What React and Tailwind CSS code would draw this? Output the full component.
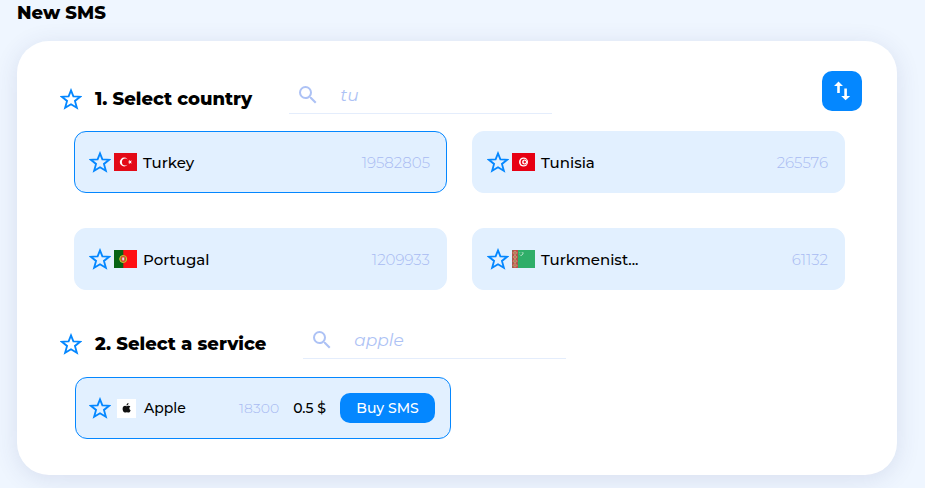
import React from "react";

function Star({ label }) {
  return (
    <button type="button" aria-label={label} className="shrink-0 text-[#0487ff]">
      <svg viewBox="0 0 24 24" className="block h-[22px] w-[22px]" fill="none" stroke="currentColor" strokeWidth="2">
        <path d="M12 2.6 14.6 9.1 22 9.5 16.3 14.1 18.4 21.6 12 17.7 5.6 21.6 7.7 14.1 2 9.5 9.4 9.1Z" />
      </svg>
    </button>
  );
}

function TurkeyFlag() {
  return (
    <svg viewBox="0 0 23 18" className="h-[18px] w-[23px] shrink-0">
      <rect width="23" height="18" fill="#e30a17" />
      <circle cx="10.2" cy="9" r="4.4" fill="#fff" />
      <circle cx="11.4" cy="9" r="3.5" fill="#e30a17" />
      <path d="m13.8 9 1.5-.6V6.8l1 1.3 1.6-.5-1 1.4 1 1.4-1.6-.5-1 1.3V9.6Z" fill="#fff" />
    </svg>
  );
}

function TunisiaFlag() {
  return (
    <svg viewBox="0 0 23 18" className="h-[18px] w-[23px] shrink-0">
      <rect width="23" height="18" fill="#e70013" />
      <circle cx="11.5" cy="9" r="4.5" fill="#fff" />
      <circle cx="11.8" cy="9" r="3.2" fill="#e70013" />
      <circle cx="12.6" cy="9" r="2.5" fill="#fff" />
      <path d="m10.7 9 1.4-.5V7l.9 1.2 1.4-.4-.9 1.2.9 1.2-1.4-.4-.9 1.2V9.5Z" fill="#e70013" />
    </svg>
  );
}

function PortugalFlag() {
  return (
    <svg viewBox="0 0 23 18" className="h-[18px] w-[23px] shrink-0">
      <rect width="23" height="18" fill="#ff0f12" />
      <rect width="9.3" height="18" fill="#066314" />
      <circle cx="9.2" cy="9" r="3.5" fill="#7d8a1c" stroke="#d5c436" strokeWidth="1" />
      <path d="M7.2 6.6h4v3.2a2 2 0 0 1-4 0Z" fill="#f03a2e" />
      <path d="M8.2 7.4h2v2.2a1 1 0 0 1-2 0Z" fill="#dfe3f2" />
    </svg>
  );
}

function TurkmenistanFlag() {
  return (
    <svg viewBox="0 0 23 18" className="h-[18px] w-[23px] shrink-0">
      <rect width="23" height="18" fill="#2fae69" />
      <rect width="6" height="18" fill="#c1504a" />
      <path d="M3 .8 5 2.8 3 4.8 1 2.8ZM3 5 5 7 3 9 1 7ZM3 9.2l2 2-2 2-2-2ZM3 13.4l2 2-2 2-2-2Z" fill="#a98a5a" stroke="#e0a79a" strokeWidth=".5" />
      <path d="M0 1h1M0 5h1M0 9h1M0 13h1M0 17h1M5 5h1M5 9h1M5 13h1" stroke="#5d8a55" />
      <path d="M10.8 2.2a2.3 2.3 0 0 1-2.3 3.2" fill="none" stroke="#d8f3e2" strokeWidth=".9" />
      <path d="M7.4 2.6h.7M8.8 2.4h.6M7.5 4.2h.6" stroke="#b5e4c8" strokeWidth=".7" />
    </svg>
  );
}

function AppleLogo() {
  return (
    <svg viewBox="0 0 19 19" className="h-[19px] w-[19px] shrink-0">
      <rect width="19" height="19" fill="#fff" />
      <path
        d="M9.6 7.2c.5 0 1-.5 2-.5.8 0 1.4.4 1.8.9-1.5.9-1.3 3 .2 3.6-.4 1.2-1.2 2.4-2.1 2.4-.7 0-1-.4-1.8-.4s-1.100.4-1.800.4C6.700 13.600 5.600 11.700 5.600 9.900c0-2 1.200-3.200 2.500-3.200.7 0 1.100.5 1.500.5ZM9.500 6.600c0-1.300.8-2.300 2-2.500.1 1.300-.8 2.400-2 2.500Z"
        fill="#111"
      />
    </svg>
  );
}

function SectionHeader({ title, id, query, children }) {
  return (
    <div className="flex items-end">
      <div className="flex h-[30px] items-center gap-[13px]">
        <Star label={"Favourite: " + title} />
        <h2 className="whitespace-nowrap text-lg font-extrabold text-black">{title}</h2>
      </div>
      <div className="ml-[37px] flex h-[38px] w-[263px] items-center border-b border-[#e4edfc] pl-[7px] text-[#adc2f5]">
        <label htmlFor={id} aria-label={"Search: " + title}>
          <svg viewBox="0 0 24 24" className="h-6 w-6" fill="currentColor">
            <path d="M15.500 14h-.79l-.28-.27A6.470 6.470 0 0 0 16 9.500 6.500 6.500 0 1 0 9.500 16c1.610 0 3.090-.59 4.230-1.570l.27.28v.79l5 4.990L20.490 19l-4.990-5zm-6 0C7.010 14 5 11.990 5 9.500S7.010 5 9.500 5 14 7.010 14 9.500 11.990 14 9.500 14z" />
          </svg>
        </label>
        <input id={id} type="text" defaultValue={query} className="ml-5 min-w-0 flex-1 bg-transparent pt-0.5 text-[17px] italic outline-none" />
      </div>
      {children}
    </div>
  );
}

const countries = [
  { name: "Turkey", count: "19582805", Flag: TurkeyFlag, selected: true },
  { name: "Tunisia", count: "265576", Flag: TunisiaFlag },
  { name: "Portugal", count: "1209933", Flag: PortugalFlag },
  { name: "Turkmenist...", count: "61132", Flag: TurkmenistanFlag },
];

function CountryCard({ name, count, Flag, selected }) {
  return (
    <li
      className={
        "flex h-[62px] items-center rounded-xl border bg-[#e2f0ff] pl-[14px] pr-4 " +
        (selected ? "border-[#0487ff]" : "border-[#e2f0ff]")
      }
    >
      <Star label={"Favourite " + name} />
      <span className="ml-[3px] flex">
        <Flag />
      </span>
      <span className="ml-[6px] pt-0.5 text-[15px] font-medium text-black">{name}</span>
      <span className="ml-auto pt-0.5 text-[15px] font-light text-[#a9bbf2]">{count}</span>
    </li>
  );
}

export default function App() {
  return (
    <main className="min-h-screen bg-[#eff6ff] pl-[17px] pr-7 font-['Montserrat',Inter,sans-serif]">
      <h1 className="text-lg font-extrabold leading-[26px] text-black">New SMS</h1>
      <section className="mt-[15px] rounded-[32px] bg-white pb-9 pl-[43px] pr-[35px] pt-[30px] shadow-[0_4px_24px_rgba(50,60,120,0.12)]">
        <SectionHeader title="1. Select country" id="country-search" query="tu">
          <button
            type="button"
            aria-label="Change sort order"
            className="mb-[3px] ml-auto flex h-10 w-10 items-center justify-center rounded-[10px] bg-[#0487ff] text-white"
          >
            <svg viewBox="0 0 24 24" className="h-6 w-6" fill="currentColor">
              <path d="M8.500 2.500 4 7h3.200v7h2.600V7H13ZM16.900 17V9.500h-2.600V17h-3.100l4.400 4.300L20.200 17Z" />
            </svg>
          </button>
        </SectionHeader>
        <ul className="ml-[14px] mr-[17px] mt-[17px] grid grid-cols-2 gap-x-[25px] gap-y-[35px]">
          {countries.map((c) => (
            <CountryCard key={c.name} {...c} />
          ))}
        </ul>
        <div className="mt-[31px]">
          <SectionHeader title="2. Select a service" id="service-search" query="apple" />
        </div>
        <div className="ml-[15px] mt-[18px] flex h-[62px] w-[376px] items-center rounded-xl border border-[#0487ff] bg-[#e2f0ff] pl-[13px] pr-[15px]">
          <Star label="Favourite Apple" />
          <span className="ml-[6px] flex">
            <AppleLogo />
          </span>
          <span className="ml-2 text-sm font-medium text-black">Apple</span>
          <span className="ml-auto text-sm font-light text-[#a9bbf2]">18300</span>
          <span className="ml-[14px] text-sm font-medium text-black">0.5 $</span>
          <button type="button" className="ml-[14px] h-[30px] w-[95px] rounded-[10px] bg-[#0487ff] text-sm font-medium text-white">
            Buy SMS
          </button>
        </div>
      </section>
    </main>
  );
}
